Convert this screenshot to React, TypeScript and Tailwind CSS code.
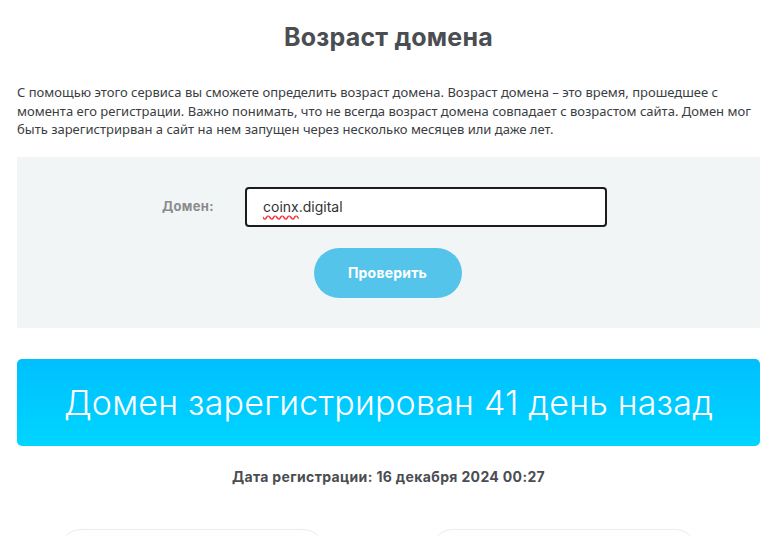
import React from "react";

export default function App() {
  return (
    <div className="w-[777px] h-[536px] overflow-hidden bg-white">
      <div className="px-[17px]">
        <h1 className="pt-[20px] text-center text-[25px] leading-[34px] font-bold text-[#4a4d52] [font-family:Inter,'Noto_Sans',sans-serif] tracking-[0.2px]">
          Возраст домена
        </h1>
        <p className="mt-[29px] text-[13px] leading-[18.5px] text-[#3a3d42] [font-family:'Noto_Sans','Open_Sans',sans-serif]">
          С помощью этого сервиса вы сможете определить возраст домена. Возраст домена – это время, прошедшее с
          <br />
          момента его регистрации. Важно понимать, что не всегда возраст домена совпадает с возрастом сайта. Домен мог
          <br />
          быть зарегистрирван а сайт на нем запущен через несколько месяцев или даже лет.
        </p>
        <div className="mt-[18px] h-[171px] bg-[#f2f5f6] pt-[30px] flex flex-col">
          <div className="flex items-center ml-[145px]">
            <span className="w-[83px] text-[13px] font-bold text-[#8a8c8e] [font-family:Inter,sans-serif] tracking-[0.3px]">
              Домен:
            </span>
            <div className="w-[362px] h-[40px] rounded-[4px] border-2 border-[#1c1c1c] bg-white flex items-center pl-[16px] text-[14px] text-[#333] [font-family:Inter,sans-serif]">
              <span className="underline decoration-wavy decoration-red-500 underline-offset-[3px]">coinx</span>
              <span>.digital</span>
            </div>
          </div>
          <button className="mt-[21px] self-center ml-[-2px] w-[148px] h-[50px] rounded-full bg-[#54c4eb] text-white text-[14px] font-bold [font-family:Inter,sans-serif] tracking-[0.2px]">
            Проверить
          </button>
        </div>
        <div className="mt-[31px] h-[87px] rounded-[5px] bg-gradient-to-b from-[#00bfff] to-[#00d5ff] flex items-center justify-center">
          <span className="text-white text-[34px] font-light [font-family:Inter,sans-serif] tracking-[0.2px]">
            Домен зарегистрирован 41 день назад
          </span>
        </div>
        <div className="mt-[20px] text-center text-[14px] font-bold text-[#4a4d52] [font-family:Inter,sans-serif] tracking-[0.35px]">
          Дата регистрации: 16 декабря 2024 00:27
        </div>
        <div className="mt-[42px] flex pl-[42px] gap-[106px]">
          <div className="w-[266px] h-[60px] rounded-[22px] border border-[#ececec] bg-white" />
          <div className="w-[266px] h-[60px] rounded-[22px] border border-[#ececec] bg-white" />
        </div>
      </div>
    </div>
  );
}
